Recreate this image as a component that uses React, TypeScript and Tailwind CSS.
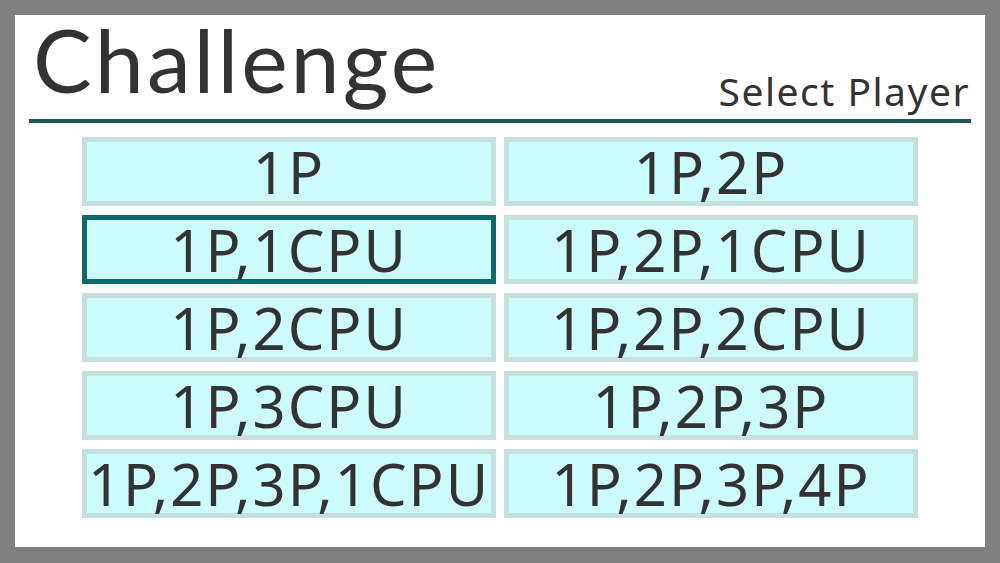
const players = [
  '1P',
  '1P,2P',
  '1P,1CPU',
  '1P,2P,1CPU',
  '1P,2CPU',
  '1P,2P,2CPU',
  '1P,3CPU',
  '1P,2P,3P',
  '1P,2P,3P,1CPU',
  '1P,2P,3P,4P',
]

export default function App() {
  const selected = 2

  return (
    <div className="w-[1000px] h-[563px] bg-[#808080] pt-[15px] pb-[16px] px-[15px]">
      <div className="h-full bg-white flex flex-col px-[14px]">
        <div className="flex items-end justify-between border-b-[4px] border-[#1d5959] h-[108px]">
          <h1 className="font-['Lato',sans-serif] text-[88px] tracking-[3px] leading-none text-[#333] pl-[4px] mb-[16px]">
            Challenge
          </h1>
          <span className="font-['Noto_Sans',sans-serif] text-[39px] tracking-[1.5px] leading-none text-[#333] pr-[1px] mb-[9px]">
            Select Player
          </span>
        </div>
        <div className="grid grid-cols-[414px_414px] gap-x-[8px] gap-y-[9px] justify-center mt-[14px]">
          {players.map((p, i) => (
            <button
              key={p}
              type="button"
              className={`h-[69px] border-[5px] flex items-center justify-center bg-[#ccfcfc] text-[#333] font-['Noto_Sans',sans-serif] text-[58px] tracking-[2px] leading-none ${
                i === selected ? 'border-[#0c6a6a]' : 'border-[#c6e0e0]'
              }`}
            >
              {p}
            </button>
          ))}
        </div>
      </div>
    </div>
  )
}
